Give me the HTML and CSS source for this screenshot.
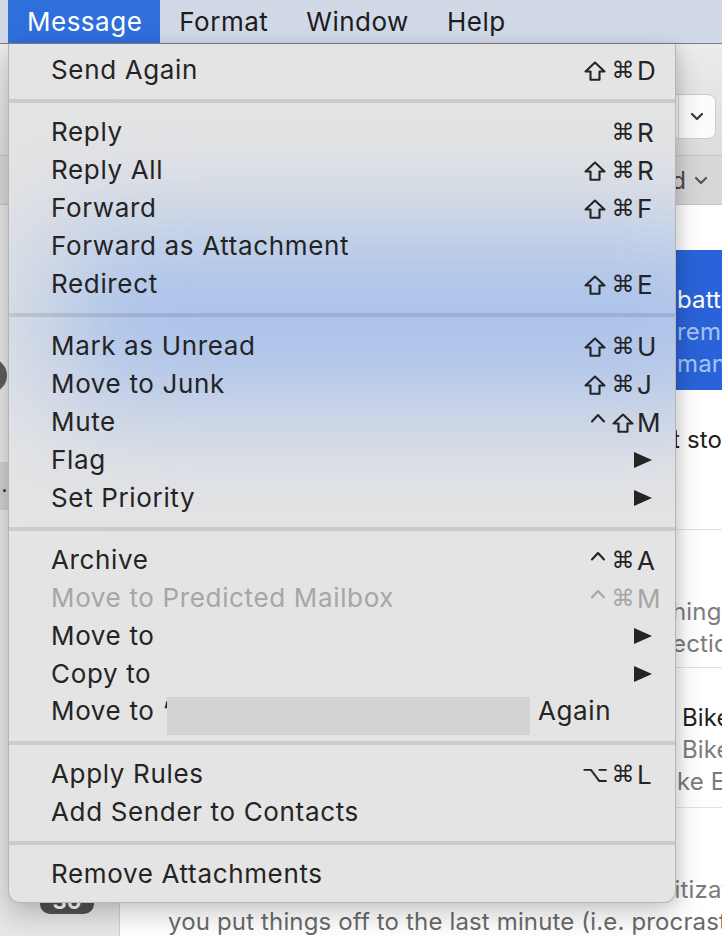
FILE: index.html
```html
<!DOCTYPE html>
<html lang="en">
<head>
<meta charset="utf-8">
<title>Mail – Message menu</title>
<link rel="stylesheet" href="styles.css">
</head>
<body>
<div class="screen">
  <header class="menubar">
    <span class="mb-item active">Message</span>
    <span class="mb-item">Format</span>
    <span class="mb-item">Window</span>
    <span class="mb-item">Help</span>
  </header>

  <div class="window">
    <div class="toolbar">
      <div class="seg">
        <span class="seg-a"></span>
        <span class="seg-b"><svg width="14" height="9" viewBox="0 0 14 9"><path d="M2 2l5 5 5-5" fill="none" stroke="#3a3a3a" stroke-width="2.2" stroke-linecap="round" stroke-linejoin="round"/></svg></span>
      </div>
    </div>
    <div class="filterbar">
      <span class="filter">Filtered by: Unread</span>
      <svg width="14" height="9" viewBox="0 0 14 9"><path d="M2 2l5 5 5-5" fill="none" stroke="#555" stroke-width="2.2" stroke-linecap="round" stroke-linejoin="round"/></svg>
    </div>
    <div class="body">
      <aside class="sidebar">
        <div class="sb-circle"></div>
        <div class="sb-sel"><span class="sb-dot"></span></div>
        <div class="sb-count">30</div>
      </aside>
      <section class="list">
        <div class="row sel">
          <div class="ln"><span class="clip">Amazon.com</span><span></span></div>
          <div class="ln strong"><span class="clip">Your order of Anker portable </span><span>battery pack has shipped</span></div>
          <div class="ln soft"><span class="clip">Hello, we wanted to send a quick </span><span>remember that your</span></div>
          <div class="ln soft"><span class="clip">order will arrive soon. You can </span><span>manage it online</span></div>
        </div>
        <div class="row">
          <div class="ln"><span class="clip">Medium Daily Digest</span><span></span></div>
          <div class="ln"><span class="clip">The habits of highly productive people and the bes</span><span class="out">t stories of the week</span></div>
          <div class="ln muted"><span class="clip">Stories for you, picked by our editors</span><span></span></div>
          <div class="ln muted"><span class="clip">Read more on Medium</span><span></span></div>
        </div>
        <div class="row short">
          <div class="ln"><span class="clip">Newsletter</span><span></span></div>
          <div class="ln"><span class="clip">Weekly roundup</span><span></span></div>
          <div class="ln muted"><span class="clip">This week we look at the little t</span><span class="out">hings that matter</span></div>
          <div class="ln muted"><span class="clip">and share a new collection of s</span><span class="out">ections</span></div>
        </div>
        <div class="row">
          <div class="ln"><span class="clip">Bike Shop</span><span></span></div>
          <div class="ln"><span class="clip">Spring service special at your local </span><span class="in">Bike Shop</span></div>
          <div class="ln muted"><span class="clip">Bring your bike in for a tune-up at the </span><span class="in">Bike Shop</span></div>
          <div class="ln muted"><span class="clip">and save 20% on parts. The Bi</span><span>ke Experts</span></div>
        </div>
        <div class="row last">
          <div class="ln"><span class="clip">Productivity Weekly</span><span></span></div>
          <div class="ln"><span class="clip">How to stop procrastinating</span><span></span></div>
          <div class="ln muted"><span class="clip">Effective time management requires prio</span><span class="out2">ritization</span></div>
          <div class="ln muted full">you put things off to the last minute (i.e. procrastinate)</div>
        </div>
      </section>
    </div>
  </div>

  <nav class="menu">
    <div class="glow"></div>
    <div class="item"><span class="lbl">Send Again</span><span class="keys"><span><svg class="shift" width="22" height="20" viewBox="0 0 22 20"><path d="M11 1.5L20.5 10.5H15.5V18.8H6.5V10.5H1.5Z"/></svg></span><span>⌘</span><span class="l">D</span></span></div>
    <div class="sep"></div>
    <div class="item"><span class="lbl">Reply</span><span class="keys"><span></span><span>⌘</span><span class="l">R</span></span></div>
    <div class="item"><span class="lbl">Reply All</span><span class="keys"><span><svg class="shift" width="22" height="20" viewBox="0 0 22 20"><path d="M11 1.5L20.5 10.5H15.5V18.8H6.5V10.5H1.5Z"/></svg></span><span>⌘</span><span class="l">R</span></span></div>
    <div class="item"><span class="lbl">Forward</span><span class="keys"><span><svg class="shift" width="22" height="20" viewBox="0 0 22 20"><path d="M11 1.5L20.5 10.5H15.5V18.8H6.5V10.5H1.5Z"/></svg></span><span>⌘</span><span class="l">F</span></span></div>
    <div class="item"><span class="lbl">Forward as Attachment</span></div>
    <div class="item"><span class="lbl">Redirect</span><span class="keys"><span><svg class="shift" width="22" height="20" viewBox="0 0 22 20"><path d="M11 1.5L20.5 10.5H15.5V18.8H6.5V10.5H1.5Z"/></svg></span><span>⌘</span><span class="l">E</span></span></div>
    <div class="sep"></div>
    <div class="item"><span class="lbl">Mark as Unread</span><span class="keys"><span><svg class="shift" width="22" height="20" viewBox="0 0 22 20"><path d="M11 1.5L20.5 10.5H15.5V18.8H6.5V10.5H1.5Z"/></svg></span><span>⌘</span><span class="l">U</span></span></div>
    <div class="item"><span class="lbl">Move to Junk</span><span class="keys"><span><svg class="shift" width="22" height="20" viewBox="0 0 22 20"><path d="M11 1.5L20.5 10.5H15.5V18.8H6.5V10.5H1.5Z"/></svg></span><span>⌘</span><span class="l">J</span></span></div>
    <div class="item"><span class="lbl">Mute</span><span class="keys"><span><svg class="ctrl" width="18" height="20" viewBox="0 0 18 20"><path d="M3 9.5L9 3L15 9.5"/></svg></span><span><svg class="shift" width="22" height="20" viewBox="0 0 22 20"><path d="M11 1.5L20.5 10.5H15.5V18.8H6.5V10.5H1.5Z"/></svg></span><span class="l">M</span></span></div>
    <div class="item"><span class="lbl">Flag</span><svg class="sub" width="18" height="16" viewBox="0 0 18 16"><polygon points="0,0 18,8 0,16"/></svg></div>
    <div class="item"><span class="lbl">Set Priority</span><svg class="sub" width="18" height="16" viewBox="0 0 18 16"><polygon points="0,0 18,8 0,16"/></svg></div>
    <div class="sep"></div>
    <div class="item"><span class="lbl">Archive</span><span class="keys"><span><svg class="ctrl" width="18" height="20" viewBox="0 0 18 20"><path d="M3 9.5L9 3L15 9.5"/></svg></span><span>⌘</span><span class="l">A</span></span></div>
    <div class="item dis"><span class="lbl">Move to Predicted Mailbox</span><span class="keys"><span><svg class="ctrl" width="18" height="20" viewBox="0 0 18 20"><path d="M3 9.5L9 3L15 9.5"/></svg></span><span>⌘</span><span class="l">M</span></span></div>
    <div class="item"><span class="lbl">Move to</span><svg class="sub" width="18" height="16" viewBox="0 0 18 16"><polygon points="0,0 18,8 0,16"/></svg></div>
    <div class="item"><span class="lbl">Copy to</span><svg class="sub" width="18" height="16" viewBox="0 0 18 16"><polygon points="0,0 18,8 0,16"/></svg></div>
    <div class="item"><span class="lbl">Move to ‘<span class="redact"></span> Again</span></div>
    <div class="sep"></div>
    <div class="item"><span class="lbl">Apply Rules</span><span class="keys"><span>⌥</span><span>⌘</span><span class="l">L</span></span></div>
    <div class="item"><span class="lbl">Add Sender to Contacts</span></div>
    <div class="sep"></div>
    <div class="item"><span class="lbl">Remove Attachments</span></div>
  </nav>
</div>
</body>
</html>
```

FILE: styles.css
```css
* { box-sizing: border-box; }
html, body { margin: 0; padding: 0; }
body {
  width: 722px;
  height: 936px;
  overflow: hidden;
  font-family: Inter, "Noto Sans", "DejaVu Sans", sans-serif;
  background: #e6e6e6;
}

.screen {
  position: relative;
  width: 722px;
  height: 936px;
  overflow: hidden;
  display: flex;
  flex-direction: column;
}

/* ---------- menu bar ---------- */
.menubar {
  flex: none;
  height: 44px;
  display: flex;
  align-items: stretch;
  padding-left: 8px;
  background: #d1d8e6;
  border-bottom: 1px solid #7c7f87;
  font-size: 26px;
  letter-spacing: 0.5px;
  color: #1c1c1e;
}
.mb-item {
  display: flex;
  align-items: center;
  padding: 0 19px 1px;
}
.mb-item.active {
  background: #2f6fdc;
  color: #fff;
  padding: 0 18px 1px 19px;
}

/* ---------- mail window (behind the menu) ---------- */
.window {
  flex: 1;
  min-height: 0;
  display: flex;
  flex-direction: column;
}
.toolbar {
  flex: none;
  height: 111px;
  display: flex;
  justify-content: flex-end;
  align-items: flex-start;
  padding: 50px 6px 0 0;
  background: linear-gradient(#ececec, #dcdcdc);
}
.seg {
  display: flex;
  height: 45px;
  background: #fcfcfc;
  border: 1px solid #cbcbcb;
  border-radius: 8px;
}
.seg-a { width: 60px; border-right: 1px solid #d4d4d4; }
.seg-b {
  width: 36px;
  display: flex;
  align-items: center;
  justify-content: center;
}
.filterbar {
  flex: none;
  height: 50px;
  display: flex;
  justify-content: flex-end;
  align-items: center;
  gap: 8px;
  padding-right: 14px;
  background: #d7d7d7;
  border-top: 1px solid #c4c4c4;
  border-bottom: 1px solid #c4c4c4;
  font-size: 24px;
  color: #4a4a4a;
}
.filter { white-space: nowrap; }

.body {
  flex: 1;
  min-height: 0;
  display: flex;
}
.sidebar {
  flex: none;
  width: 120px;
  display: flex;
  flex-direction: column;
  background: #e6e6e6;
  border-right: 1px solid #cfcfcf;
}
.sb-circle {
  margin: 153px 0 0 -28px;
  width: 35px;
  height: 35px;
  border-radius: 50%;
  background: #5d5d5d;
}
.sb-sel {
  margin-top: 69px;
  height: 48px;
  display: flex;
  align-items: center;
  padding-left: 3px;
  padding-top: 8px;
  background: #cfcfcf;
}
.sb-dot {
  width: 3px;
  height: 3px;
  border-radius: 50%;
  background: #333;
}
.sb-count {
  margin: 378px 0 0 40px;
  width: 54px;
  height: 26px;
  border-radius: 10px;
  background: #525252;
  color: #fff;
  font-size: 22px;
  font-weight: 700;
  line-height: 26px;
  text-align: center;
}

.list {
  flex: 1;
  min-width: 0;
  background: #fff;
  padding-top: 45px;
  font-size: 24px;
  letter-spacing: 0.15px;
  color: #222;
}
.row {
  height: 140px;
  padding: 2px 0 0 48px;
  border-bottom: 1px solid #e2e2e2;
  overflow: hidden;
}
.row.short { height: 138px; }
.row.sel {
  background: #2a63d9;
  color: #fff;
  border-bottom-color: #2a63d9;
}
.row.last { border-bottom: none; }
.ln {
  height: 32px;
  line-height: 32px;
  display: flex;
  white-space: nowrap;
}
.ln .clip {
  flex: none;
  width: 509px;
  overflow: hidden;
}
.ln .in { padding-left: 5px; }
.ln .out { margin-left: -5px; }
.ln .out2 { margin-left: -12px; }
.ln.muted { color: #7c7c7c; }
.ln.soft { color: #a9c3f4; }
.ln.full { display: block; color: #6a6a6a; }

/* ---------- dropdown menu ---------- */
.menu {
  position: absolute;
  top: 44px;
  left: 8px;
  width: 668px;
  padding: 7px 0 9px;
  background: #e4e4e4;
  border: 1px solid rgba(0, 0, 0, 0.2);
  border-top: none;
  border-radius: 0 0 12px 12px;
  box-shadow: 0 10px 28px rgba(0, 0, 0, 0.22), 4px 0 10px rgba(0, 0, 0, 0.06);
  overflow: hidden;
  font-size: 26px;
  letter-spacing: 0.65px;
  color: #242424;
}
.glow {
  position: absolute;
  left: 40px;
  top: 192px;
  width: 720px;
  height: 165px;
  background: #88aeef;
  filter: blur(62px);
  opacity: 0.7;
}
.item {
  position: relative;
  height: 38px;
  display: flex;
  align-items: center;
  padding: 0 10px 0 42px;
  white-space: nowrap;
}
.item.dis { color: #a6a6a6; }
.lbl { line-height: 38px; }
.keys {
  margin-left: auto;
  display: grid;
  grid-template-columns: 28px 28px 28px;
  align-items: center;
  font-family: "DejaVu Sans", sans-serif;
  font-size: 23px;
  letter-spacing: 0;
}
.keys span {
  display: flex;
  justify-content: center;
  align-items: center;
}
.keys .l {
  justify-content: flex-start;
  font-family: Inter, "Noto Sans", sans-serif;
  font-size: 26px;
}
.shift path,
.ctrl path {
  fill: none;
  stroke: currentColor;
  stroke-width: 2.1;
  stroke-linejoin: round;
  stroke-linecap: round;
}
.shift { margin-top: 1px; }
.ctrl { margin-left: 6px; }
.sub {
  margin-left: auto;
  margin-right: 13px;
  fill: #242424;
}
.redact {
  display: inline-block;
  width: 363px;
  height: 38px;
  margin-left: -3px;
  vertical-align: middle;
  transform: translateY(3px);
  background: #d3d3d3;
}
.sep {
  position: relative;
  height: 24px;
  display: flex;
  align-items: center;
}
.sep::before {
  content: "";
  flex: 1;
  height: 4px;
  background: rgba(0, 0, 0, 0.1);
}
```
